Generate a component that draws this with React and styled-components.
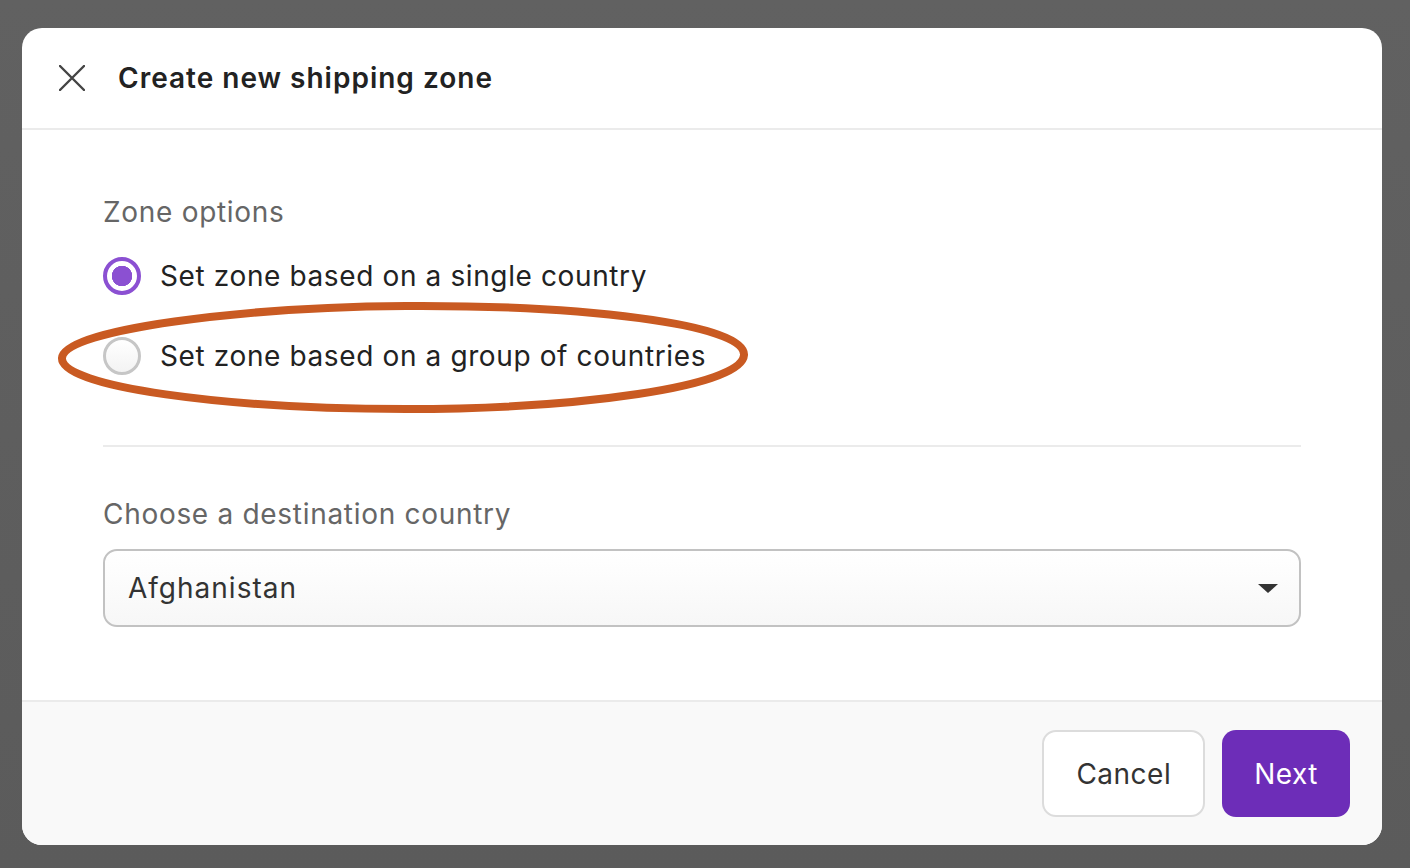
import React, { useState } from "react";
import styled, { createGlobalStyle } from "styled-components";

const GlobalStyle = createGlobalStyle`
  html, body {
    margin: 0;
    padding: 0;
    background: #5e5e5e;
  }
  body {
    font-family: Inter, "Noto Sans", "Liberation Sans", sans-serif;
    -webkit-font-smoothing: antialiased;
  }
`;

const options = [
  { id: "single", label: "Set zone based on a single country" },
  { id: "group", label: "Set zone based on a group of countries" },
];

const App = () => {
  const [zone, setZone] = useState("single");

  return (
    <>
      <GlobalStyle />
      <Backdrop>
        <Modal>
          <Header>
            <CloseButton aria-label="Close">
              <svg width="26" height="26" viewBox="0 0 26 26">
                <path
                  d="M1 1 L25 25 M25 1 L1 25"
                  stroke="#444"
                  strokeWidth="2.4"
                  strokeLinecap="round"
                />
              </svg>
            </CloseButton>
            <Title>Create new shipping zone</Title>
          </Header>

          <Body>
            <Label>Zone options</Label>
            <RadioGroup>
              {options.map((opt) => (
                <RadioRow key={opt.id} onClick={() => setZone(opt.id)}>
                  <Radio checked={zone === opt.id} />
                  <RadioText>{opt.label}</RadioText>
                </RadioRow>
              ))}
              {/* hand-drawn annotation around the second option */}
              <Highlight width="696" height="114" viewBox="0 0 696 114">
                <path
                  d="M6 57 C 8 28, 190 6, 350 5 C 520 4, 690 22, 688 54 C 686 86, 520 108, 350 108 C 170 108, 4 86, 6 57 Z"
                  fill="none"
                  stroke="#c95a22"
                  strokeWidth="8"
                />
              </Highlight>
            </RadioGroup>

            <Divider />

            <Label>Choose a destination country</Label>
            <Select>
              <SelectValue>Afghanistan</SelectValue>
              <Caret />
            </Select>
          </Body>

          <Footer>
            <Button>Cancel</Button>
            <Button primary>Next</Button>
          </Footer>
        </Modal>
      </Backdrop>
    </>
  );
};

const Backdrop = styled.div`
  min-height: 868px;
  box-sizing: border-box;
  padding: 28px 0 0 22px;
  background: linear-gradient(#616161, #5b5b5b);
`;

const Modal = styled.div`
  width: 1360px;
  background: #fff;
  border-radius: 20px;
  overflow: hidden;
  display: flex;
  flex-direction: column;
`;

const Header = styled.div`
  height: 100px;
  display: flex;
  align-items: center;
  gap: 33px;
  padding: 0 37px;
  border-bottom: 2px solid #ebebeb;
`;

const CloseButton = styled.button`
  display: flex;
  padding: 0;
  border: none;
  background: none;
  cursor: pointer;
`;

const Title = styled.h1`
  margin: 0;
  font-size: 28px;
  font-weight: 600;
  color: #222;
  letter-spacing: 1px;
`;

const Body = styled.div`
  padding: 66px 81px 73px;
  display: flex;
  flex-direction: column;
`;

const Label = styled.div`
  font-size: 28px;
  line-height: 32px;
  color: #666;
  letter-spacing: 0.7px;
`;

const RadioGroup = styled.div`
  position: relative;
  display: flex;
  flex-direction: column;
  gap: 40px;
  margin-top: 28px;
`;

const RadioRow = styled.label`
  display: flex;
  align-items: center;
  gap: 19px;
  height: 40px;
  cursor: pointer;
`;

const Radio = styled.span`
  width: 38px;
  height: 38px;
  box-sizing: border-box;
  border-radius: 50%;
  border: ${(p) => (p.checked ? "4px solid #8b50d2" : "3px solid #c6c6c6")};
  background: ${(p) =>
    p.checked
      ? "radial-gradient(circle, #8b50d2 0 10px, #fff 10.5px)"
      : "linear-gradient(#fff, #f3f3f3)"};
  flex-shrink: 0;
`;

const RadioText = styled.span`
  font-size: 28px;
  color: #222;
  letter-spacing: 0.62px;
`;

const Highlight = styled.svg`
  position: absolute;
  left: -47px;
  top: 45px;
  pointer-events: none;
`;

const Divider = styled.hr`
  margin: 69px 0 51px;
  border: none;
  border-top: 2px solid #ebebeb;
`;

const Select = styled.div`
  margin-top: 19px;
  height: 78px;
  box-sizing: border-box;
  display: flex;
  align-items: center;
  justify-content: space-between;
  padding: 0 21px 0 23px;
  border: 2px solid #c2c2c2;
  border-radius: 14px;
  background: linear-gradient(#fff, #f7f7f7);
`;

const SelectValue = styled.span`
  font-size: 28px;
  color: #333;
  letter-spacing: 1px;
`;

const Caret = styled.span`
  width: 0;
  height: 0;
  border-left: 10px solid transparent;
  border-right: 10px solid transparent;
  border-top: 9px solid #333;
`;

const Footer = styled.div`
  height: 145px;
  box-sizing: border-box;
  display: flex;
  align-items: center;
  justify-content: flex-end;
  gap: 17px;
  padding: 0 32px 0 0;
  background: #f9f9f9;
  border-top: 2px solid #ebebeb;
`;

const Button = styled.button`
  height: 87px;
  box-sizing: border-box;
  padding: 0 32px;
  border-radius: 14px;
  border: ${(p) => (p.primary ? "none" : "2px solid #dcdcdc")};
  background: ${(p) => (p.primary ? "#6d2db8" : "#fff")};
  color: ${(p) => (p.primary ? "#fff" : "#333")};
  font-family: inherit;
  font-size: 28px;
  letter-spacing: 0.5px;
  cursor: pointer;
`;

export default App;
